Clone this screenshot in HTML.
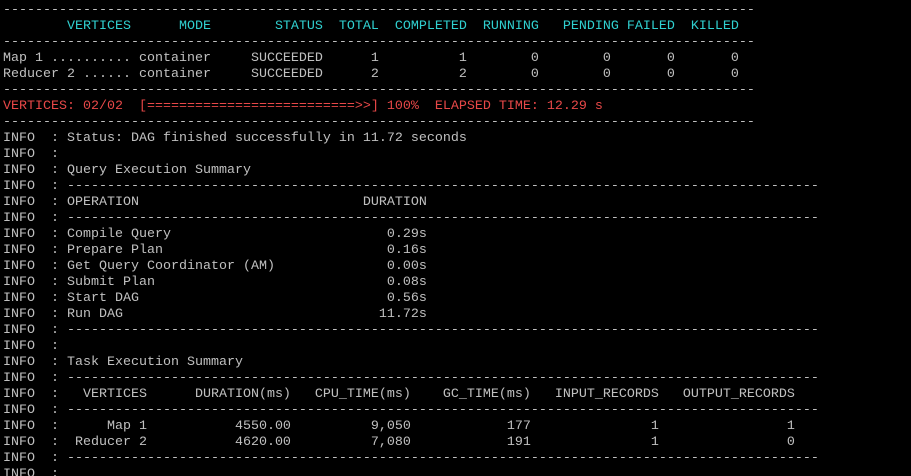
<!DOCTYPE html>
<html><head><meta charset="utf-8"><style>
html,body{margin:0;padding:0;background:#000;width:911px;height:476px;overflow:hidden}
pre{margin:0;padding:3px 0 0 3px;font-family:"Liberation Mono",monospace;font-size:13.33px;line-height:16px;color:#c0c0c0;white-space:pre}
.c{color:#30d0d0}.r{color:#e84848}
</style></head><body><pre>----------------------------------------------------------------------------------------------
<span class="c">        VERTICES      MODE        STATUS  TOTAL  COMPLETED  RUNNING   PENDING FAILED  KILLED</span>
----------------------------------------------------------------------------------------------
Map 1 .......... container     SUCCEEDED      1          1        0        0       0       0
Reducer 2 ...... container     SUCCEEDED      2          2        0        0       0       0
----------------------------------------------------------------------------------------------
<span class="r">VERTICES: 02/02  [==========================>>] 100%  ELAPSED TIME: 12.29 s</span>
----------------------------------------------------------------------------------------------
INFO  : Status: DAG finished successfully in 11.72 seconds
INFO  :
INFO  : Query Execution Summary
INFO  : ----------------------------------------------------------------------------------------------
INFO  : OPERATION                            DURATION
INFO  : ----------------------------------------------------------------------------------------------
INFO  : Compile Query                           0.29s
INFO  : Prepare Plan                            0.16s
INFO  : Get Query Coordinator (AM)              0.00s
INFO  : Submit Plan                             0.08s
INFO  : Start DAG                               0.56s
INFO  : Run DAG                                11.72s
INFO  : ----------------------------------------------------------------------------------------------
INFO  :
INFO  : Task Execution Summary
INFO  : ----------------------------------------------------------------------------------------------
INFO  :   VERTICES      DURATION(ms)   CPU_TIME(ms)    GC_TIME(ms)   INPUT_RECORDS   OUTPUT_RECORDS
INFO  : ----------------------------------------------------------------------------------------------
INFO  :      Map 1           4550.00          9,050            177               1                1
INFO  :  Reducer 2           4620.00          7,080            191               1                0
INFO  : ----------------------------------------------------------------------------------------------
INFO  :
</pre></body></html>
